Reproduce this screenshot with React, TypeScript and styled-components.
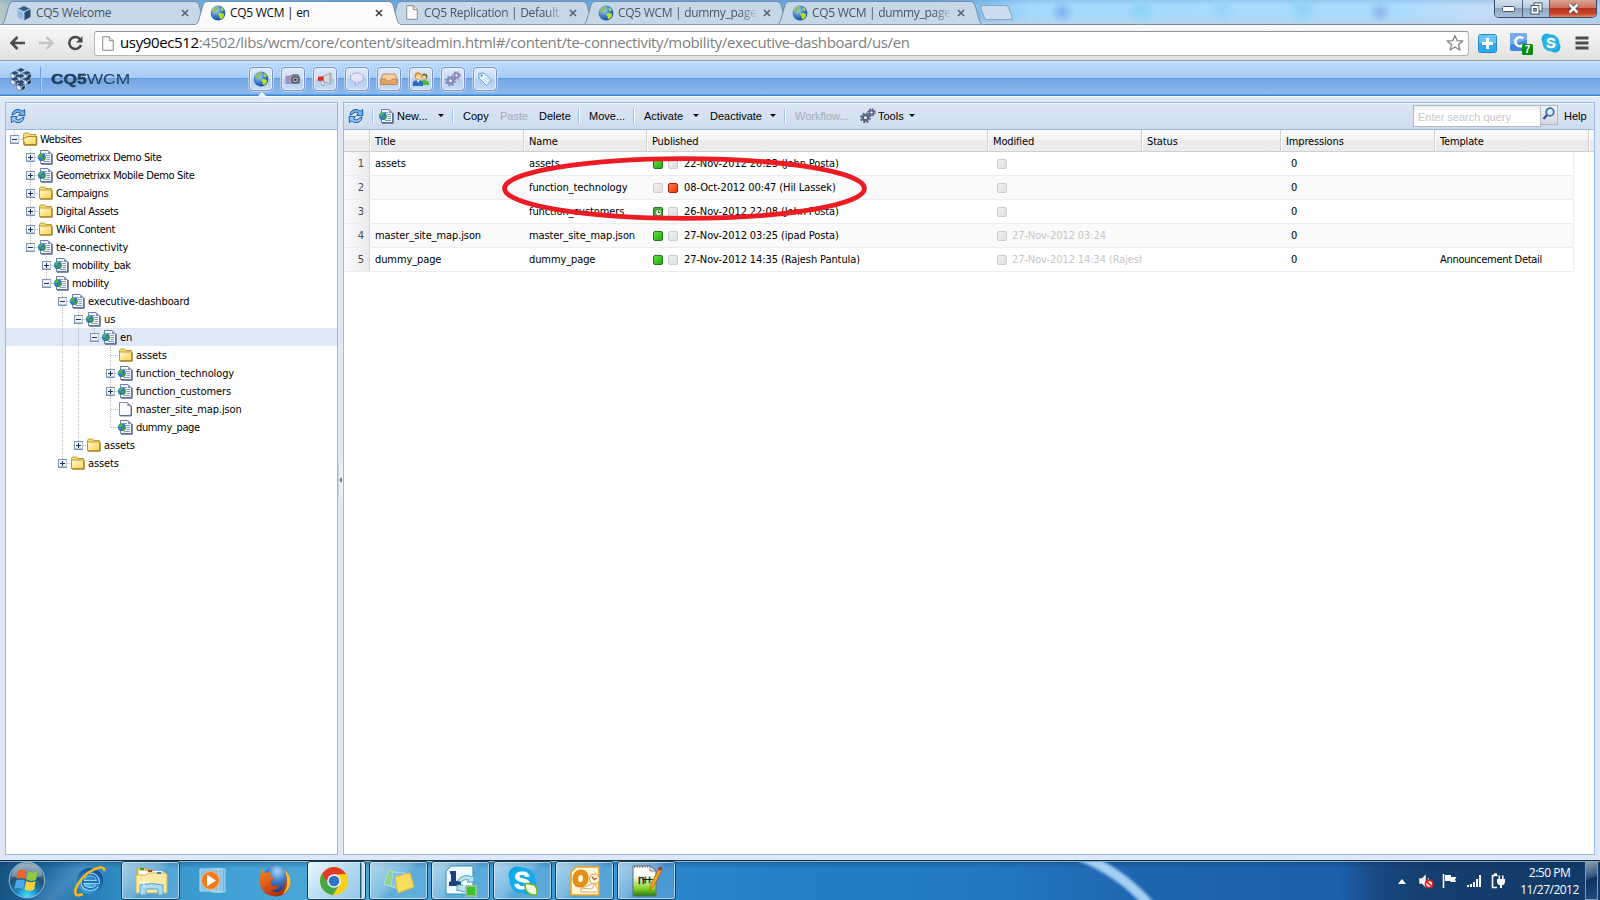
import React from 'react';
import styled, { createGlobalStyle, css } from 'styled-components';

const tahoma = `"DejaVu Sans Condensed", "DejaVu Sans", sans-serif`;
const segoe = `"Open Sans", "Noto Sans", sans-serif`;
const arial = `"Liberation Sans", Arial, sans-serif`;

const GlobalStyle = createGlobalStyle`
  * { box-sizing: border-box; }
  html, body { margin: 0; padding: 0; overflow: hidden; }
  svg { display: block; flex: none; }
`;

const Desktop = styled.div`
  width: 1600px;
  height: 900px;
  display: flex;
  flex-direction: column;
  background: #dfe8f6;
  color: #000;
  font: 11px/14px ${tahoma};
  overflow: hidden;
`;

/* ---------- Browser frame ---------- */

const TitleBar = styled.header`
  flex: none;
  height: 25px;
  display: flex;
  align-items: flex-start;
  background:
    radial-gradient(circle at 1062px 12px, #83b2ee 0, rgba(131, 178, 238, 0) 12px),
    radial-gradient(circle at 1141px 10px, #8bd2f6 0, rgba(139, 210, 246, 0) 16px),
    radial-gradient(circle at 1222px 10px, #93d4f8 0, rgba(147, 212, 248, 0) 14px),
    radial-gradient(circle at 1302px 9px, #8bd2f6 0, rgba(139, 210, 246, 0) 16px),
    radial-gradient(circle at 1380px 12px, #8ab6ec 0, rgba(138, 182, 236, 0) 12px),
    linear-gradient(180deg, rgba(80, 140, 200, 0.25) 0, rgba(255, 255, 255, 0) 5px, rgba(255, 255, 255, 0) 17px, rgba(190, 208, 228, 0.8) 24px, #75889c 24px),
    linear-gradient(90deg, #b5c8c0 0, #76aee2 30px, #6ca9e2 400px, #6cabe6 940px, #a3d9fb 1030px, #acdcfd 1400px, #c4dcf8 1480px, #a8cdf0 1600px);
`;

const TabStrip = styled.nav`
  display: flex;
  padding: 1px 0 0 1px;
`;

const TabBox = styled.div<{ $active?: boolean }>`
  position: relative;
  z-index: ${p => (p.$active ? 2 : 1)};
  width: 206px;
  height: 24px;
  margin-right: -12px;
  padding: 4px 0 0 15px;
  display: flex;
  color: ${p => (p.$active ? '#111' : '#4d5560')};
  font: 12px/16px ${segoe};
  letter-spacing: -0.3px;
`;

const TabShape = styled.svg`
  position: absolute;
  inset: 0;
  z-index: -1;
`;

const TabTitle = styled.span<{ $fade?: boolean }>`
  width: 138px;
  margin-left: 4px;
  overflow: hidden;
  white-space: nowrap;
  ${p => p.$fade && css`mask-image: linear-gradient(90deg, #000 122px, transparent 140px);`}
`;

const CloseGlyph = styled.svg`
  margin: 4px 0 0 7px;
`;

const NewTab = styled.div`
  width: 29px;
  height: 15px;
  margin: 5px 0 0 11px;
  border: 1px solid #8da3ba;
  border-radius: 3px;
  background: #cbdeef;
  transform: skewX(20deg);
`;

const WindowControls = styled.div`
  display: flex;
  height: 18px;
  margin: 0 3px 0 auto;
  border: 1px solid #3b4a5c;
  border-top: 0;
  border-radius: 0 0 5px 5px;
  overflow: hidden;
`;

const WindowButton = styled.div<{ $w: number; $close?: boolean }>`
  width: ${p => p.$w}px;
  display: flex;
  align-items: center;
  justify-content: center;
  border-right: ${p => (p.$close ? 0 : '1px solid #4f6073')};
  background: ${p => p.$close
    ? 'linear-gradient(180deg, #dba495 0, #cd7460 45%, #b8311a 50%, #c6452c 80%, #e08b6c 100%)'
    : 'linear-gradient(180deg, #d3e1ef 0, #b8cbde 45%, #8ba6c2 50%, #a6c2dc 100%)'};
`;

const BrowserBar = styled.div`
  flex: none;
  height: 36px;
  display: flex;
  align-items: center;
  background: linear-gradient(180deg, #f8f8f8 0, #e1e1e1 100%);
  border-top: 1px solid #fdfdfd;
  border-bottom: 1px solid #9c9c9c;
  padding: 0 0 0 9px;
`;

const NavIcons = styled.div`
  display: flex;
  flex: none;
  width: 85px;
  gap: 12px;
`;

const Omnibox = styled.div`
  display: flex;
  flex: none;
  align-items: center;
  width: 1375px;
  height: 25px;
  padding: 0 4px 0 7px;
  background: #fff;
  border: 1px solid #b5b5b5;
  border-top-color: #939393;
  border-radius: 3px;
`;

const Url = styled.span`
  flex: 1;
  margin: -2px 0 0 6px;
  color: #808080;
  font: 15px/22px ${segoe};
  letter-spacing: -0.36px;
  white-space: nowrap;
  b { font-weight: 400; color: #000; }
`;

const Extensions = styled.div`
  display: flex;
  align-items: center;
  margin-left: 9px;
  gap: 13px;
  svg { overflow: visible; }
`;

/* ---------- CQ header ---------- */

const AppHeader = styled.div`
  flex: none;
  height: 36px;
  display: flex;
  align-items: flex-start;
  padding: 6px 0 0 10px;
  border-bottom: 1px solid #fff;
  background: linear-gradient(180deg, #dcecfd 0, #bbdafd 2px, #a6cbf2 17px, #5c9be8 17px, #5c9be8 18px, #74a7e5 18px, #8cb8ea 33px, #3d83d6 34px, #3d83d6 35px);
`;

const Divider = styled.i`
  width: 2px;
  height: 24px;
  margin: 0 9px 0 8px;
  border-left: 1px solid #6c9edc;
  border-right: 1px solid #b4d4f7;
`;

const Brand = styled.div`
  width: 198px;
  margin-top: 4px;
  color: #23415f;
  font: 14px/16px ${arial};
  white-space: nowrap;
  span { display: inline-block; transform: scaleX(1.24); transform-origin: 0 0; }
  b { -webkit-text-stroke: 0.5px #23415f; }
`;

const Consoles = styled.div`
  display: flex;
  gap: 8px;
`;

const ConsoleButton = styled.div<{ $selected?: boolean }>`
  position: relative;
  width: 24px;
  height: 24px;
  display: flex;
  align-items: center;
  justify-content: center;
  border: 1px solid #7c93c4;
  border-radius: 4px;
  background: linear-gradient(180deg, #dfebfb 0, #c9dcf6 50%, #b3cdf2 50%, #c5dbf7 100%);
  box-shadow: inset 0 0 0 1px #e8f2fd, 0 0 0 1px rgba(220, 235, 252, 0.6);
  ${p => p.$selected && css`
    &::after {
      content: '';
      position: absolute;
      top: 24px;
      left: 7px;
      border: 5px solid transparent;
      border-top: 0;
      border-bottom: 5px solid #f0f6fe;
    }
  `}
`;

/* ---------- Panels ---------- */

const Workspace = styled.main`
  flex: none;
  height: 763px;
  display: flex;
  padding: 5px 5px 8px;
`;

const Panel = styled.section<{ $w: number }>`
  width: ${p => p.$w}px;
  height: 753px;
  display: flex;
  flex-direction: column;
  background: #fff;
  border: 1px solid #99bbe8;
`;

const PanelBar = styled.div`
  flex: none;
  height: 27px;
  display: flex;
  align-items: center;
  padding: 0 0 2px 4px;
  border-top: 1px solid #f2f6fc;
  border-bottom: 1px solid #99bbe8;
  background: linear-gradient(180deg, #dbe7f5 0, #cddbee 100%);
  font: 11px/16px ${arial};
  white-space: nowrap;
`;

const Splitter = styled.div`
  width: 5px;
  display: flex;
  flex-direction: column;
  justify-content: center;
  padding-top: 6px;
`;

const SplitHandle = styled.div`
  height: 34px;
  display: flex;
  align-items: center;
  background: #e9eff8;
  border-left: 1px solid #c6d3e6;
  &::before {
    content: '';
    border: 3px solid transparent;
    border-left: 0;
    border-right: 3px solid #7d7d7d;
  }
`;

const BarButton = styled.span<{ $w: number; $off?: boolean }>`
  width: ${p => p.$w}px;
  color: ${p => (p.$off ? '#a5adb8' : '#000')};
`;

const BarSeparator = styled.i<{ $gap?: number }>`
  width: 2px;
  height: 14px;
  margin: 0 ${p => p.$gap ?? 9}px 0 0;
  border-left: 1px solid #98c0ee;
  border-right: 1px solid #fff;
`;

const Caret = styled.i<{ $gap: number }>`
  margin-right: ${p => p.$gap}px;
  border: 3px solid transparent;
  border-top: 3px solid #000;
  border-bottom: 0;
`;

const BarIcon = styled.span<{ $gap: number }>`
  margin-right: ${p => p.$gap}px;
`;

const Search = styled.div`
  display: flex;
  align-items: flex-start;
  margin-left: auto;
  height: 22px;
`;

const SearchField = styled.div`
  width: 128px;
  height: 22px;
  padding: 3px 0 0 4px;
  border: 1px solid #b5b8c8;
  background: linear-gradient(180deg, #ececec 0, #fff 6px);
  color: #c8c8c8;
`;

const SearchButton = styled.div`
  width: 17px;
  height: 20px;
  border: 1px solid #b5b8c8;
  border-left: 0;
  background: linear-gradient(180deg, #f4f4f6 0, #d3d8e2 100%);
`;

const HelpLink = styled.span`
  width: 30px;
  margin-left: 6px;
`;

/* ---------- Tree ---------- */

const TreeRow = styled.div<{ $selected?: boolean }>`
  height: 18px;
  display: flex;
  align-items: center;
  background: ${p => (p.$selected ? '#dfe8f6' : 'transparent')};
`;

const TreeLabel = styled.span<{ $tight?: boolean }>`
  margin-left: 2px;
  padding-top: 1px;
  letter-spacing: ${p => (p.$tight ? '-0.36px' : '-0.12px')};
  white-space: nowrap;
`;

/* ---------- Grid ---------- */

const columns = '26px 154px 123px 341px 154px 139px 154px 154px';

const GridHead = styled.div`
  display: grid;
  grid-template-columns: ${columns} 1fr;
  height: 22px;
  border-bottom: 1px solid #d0d0d0;
  background: linear-gradient(180deg, #fafafa 0, #f5f5f6 45%, #ececee 50%, #eaebed 100%);
`;

const HeadCell = styled.div`
  padding: 5px 0 0 5px;
  border-right: 1px solid #cfcfcf;
  box-shadow: 1px 0 #fff;
  letter-spacing: -0.15px;
  &:last-child { border: 0; box-shadow: none; }
`;

const GridRow = styled.div<{ $alt?: boolean }>`
  display: grid;
  grid-template-columns: ${columns};
  width: 1230px;
  height: 24px;
  overflow: hidden;
  border-bottom: 1px solid #ededed;
  border-right: 1px solid #ededed;
  background: ${p => (p.$alt ? '#fafafa' : '#fff')};
`;

const Cell = styled.div<{ $inset?: number; $muted?: boolean; $tight?: boolean }>`
  display: flex;
  align-items: center;
  height: 23px;
  min-width: 0;
  overflow: hidden;
  padding-left: ${p => p.$inset ?? 5}px;
  color: ${p => (p.$muted ? '#c6c6c6' : '#000')};
  letter-spacing: ${p => (p.$tight ? '-0.3px' : '-0.1px')};
  white-space: nowrap;
`;

const NumberCell = styled.div`
  height: 24px;
  padding: 5px 5px 0 0;
  text-align: right;
  color: #4a4a4a;
  border-right: 1px solid #d8d8dc;
  background: linear-gradient(90deg, #f9f9fa 0, #f5f5f7 40%, #e9eaed 100%);
`;

const lampColors = {
  green: ['#1c7d12', '#63e04b', '#21a80f'],
  red: ['#a62500', '#ff7a4d', '#ef3300'],
  grey: ['#cccccc', '#f0f0f0', '#dedede'],
};

const Lamp = styled.i<{ $tone: keyof typeof lampColors; $gap?: number }>`
  flex: none;
  width: 10px;
  height: 10px;
  margin-right: ${p => p.$gap ?? 5}px;
  border: 1px solid ${p => lampColors[p.$tone][0]};
  border-radius: 2px;
  background: linear-gradient(135deg, ${p => lampColors[p.$tone][1]}, ${p => lampColors[p.$tone][2]});
`;

const Highlight = styled.svg`
  position: absolute;
  left: 500px;
  top: 154px;
`;

/* ---------- Taskbar ---------- */

const Taskbar = styled.footer`
  flex: none;
  position: relative;
  height: 40px;
  display: flex;
  align-items: flex-start;
  border-top: 1px solid #14303f;
  background:
    linear-gradient(180deg, rgba(170, 205, 230, 0.75) 0, rgba(170, 205, 230, 0.75) 1px, transparent 1px),
    linear-gradient(180deg, rgba(10, 40, 70, 0.35) 0, transparent 7px),
    linear-gradient(135deg, transparent 40px, rgba(160, 200, 230, 0.25) 62px, transparent 85px),
    linear-gradient(90deg, #175484 0, #2271aa 60px, #3390c8 130px, #3fa0d4 220px, #4ba6d8 300px, #3c98d2 600px, #2a86cb 680px, #2480c8 760px, #2278c0 1000px, #1e66b0 1130px, #1c5fac 1340px, #194a84 1375px, #153f70 1420px, #123a68 1600px);
`;

const Streak = styled.svg`
  position: absolute;
  left: 1060px;
  top: 1px;
`;

const StartOrb = styled.div`
  width: 59px;
  padding: 0 0 0 8px;
`;

const TaskItems = styled.div`
  display: flex;
  gap: 3px;
`;

const TaskItem = styled.div<{ $state?: 'open' | 'active' }>`
  width: 59px;
  height: 39px;
  display: flex;
  align-items: center;
  justify-content: center;
  ${p => p.$state && css`
    border: 1px solid #173f5c;
    border-radius: 3px;
    box-shadow: inset 0 0 0 1px rgba(220, 240, 252, 0.65);
    background: linear-gradient(135deg, rgba(255, 255, 255, 0.6) 0, rgba(255, 255, 255, 0.3) 45%, rgba(255, 255, 255, 0.12) 55%, rgba(255, 255, 255, 0.16) 100%);
  `}
  ${p => p.$state === 'active' && css`
    padding-right: 6px;
    background: linear-gradient(90deg, transparent 52px, #23597c 52px, #23597c 53px, rgba(255, 255, 255, 0.5) 54px, rgba(255, 255, 255, 0.2) 58px),
      linear-gradient(135deg, #eef8fd 0, #b4daef 50%, #8fc6e6 100%);
  `}
`;

const Tray = styled.div`
  display: flex;
  align-items: center;
  height: 38px;
  margin-left: auto;
  padding-top: 2px;
`;

const TrayIcon = styled.span<{ $gap: number }>`
  margin-right: ${p => p.$gap}px;
`;

const Clock = styled.div`
  width: 71px;
  color: #fff;
  font: 12px/17px ${segoe};
  letter-spacing: -0.5px;
  text-align: center;
`;

const ShowDesktop = styled.div`
  width: 13px;
  height: 38px;
  margin: 1px 2px 0 0;
  border: 1px solid #7f9dbb;
  background: linear-gradient(160deg, rgba(255, 255, 255, 0.5) 0, rgba(255, 255, 255, 0.12) 40%, rgba(10, 40, 80, 0.5) 45%, rgba(60, 120, 190, 0.3) 100%);
`;

/* ---------- Icons ---------- */

const Globe = ({ size = 16 }: { size?: number }) => (
  <svg width={size} height={size} viewBox="0 0 16 16">
    <defs>
      <radialGradient id="sea" cx="0.35" cy="0.3" r="0.8">
        <stop offset="0" stopColor="#b9dcf7" />
        <stop offset="0.5" stopColor="#3f83cf" />
        <stop offset="1" stopColor="#123f8f" />
      </radialGradient>
    </defs>
    <circle cx="8" cy="8" r="7.4" fill="url(#sea)" />
    <path d="M2 5 4.500 2.200 7.500 1l1.500 1-2 1.300.4 1.600L6 6.400 4.600 8.600 2.500 7z" fill="#8cbf6a" />
    <path d="M8.500 8.500 11 8l3 1-.4 2.800-2.400 2.400-1.400-.6-.2-2.300-1.400-1.200z" fill="#b5e61d" />
    <path d="M11.5 2.200 13.800 4.800l-1 1.4-1.6-.8-.6-1.600z" fill="#a9d838" />
  </svg>
);

const Cube = () => (
  <svg width="16" height="16" viewBox="0 0 16 16">
    <path d="M8 1 14.500 4 8 7 1.500 4z" fill="#35608c" />
    <path d="M1.500 4 8 7v8.500L1.500 12z" fill="#8fbbe2" />
    <path d="M14.500 4 8 7v8.500l6.500-3.500z" fill="#28486c" />
    <path d="M8 7v8M2 4l6 3 6-3" stroke="#e2eef8" strokeWidth="0.8" fill="none" />
  </svg>
);

const CqLogo = () => (
  <svg width="22" height="24" viewBox="0 0 22 24">
    {[[11, 4.5], [5, 7.5], [17, 7.5], [11, 10.5], [5, 13.5], [17, 13.5], [11, 16.5], [11, 19]].map(([x, y], i) => (
      <g key={i} transform={`translate(${x} ${y})`}>
        <path d="M0-3.4 4-1.5 0 .5-4-1.5z" fill="#2c4a78" />
        <path d="M-4.2-1.2-.2.9v4l-4-2.1z" fill="#e9f3fc" stroke="#335375" strokeWidth="0.5" />
        <path d="M4.2-1.2.2.9v4l4-2.1z" fill={i % 3 ? '#1d3655' : '#7ea6cc'} stroke="#e3eef9" strokeWidth="0.5" />
      </g>
    ))}
  </svg>
);

const BlankPage = ({ w = 12, h = 15, stroke = '#8a8a8a' }: { w?: number; h?: number; stroke?: string }) => (
  <svg width={w} height={h} viewBox="0 0 12 15">
    <path d="M.7.7h6.6l4 4v9.6H.7z" fill="#fcfcfc" stroke={stroke} />
    <path d="M7.3.7v4h4" fill="#e6ecef" stroke={stroke} />
  </svg>
);

const FolderIcon = ({ open }: { open?: boolean }) => (
  <svg width="16" height="16" viewBox="0 0 16 16">
    <defs>
      <linearGradient id="manila" x1="0" y1="0" x2="1" y2="1">
        <stop offset="0" stopColor="#fffbd0" />
        <stop offset="1" stopColor="#fbd050" />
      </linearGradient>
    </defs>
    <path d="M1.5 13.5v-10l1-1.5h4l1 1.5h6v10z" fill="#f6df7c" stroke="#c39a2c" />
    {open
      ? <path d="M.8 7h3l1-1.5h10v8H3z" fill="url(#manila)" stroke="#b58a1c" />
      : <path d="M1.500 5h12v8.500h-12z" fill="url(#manila)" stroke="#c39a2c" />}
    <path d="M2 14.300h12.300V5.500" stroke="#8a6412" fill="none" strokeWidth="0.8" />
  </svg>
);

const WebPageIcon = () => (
  <svg width="16" height="16" viewBox="0 0 16 16">
    <path d="M2.500 1.500h7.500l3.500 3.500v9.500h-11z" fill="#f4f7fc" stroke="#6b7da3" />
    <path d="M14.200 5v10.200H3" stroke="#4a5a80" fill="none" />
    <path d="M10 1.500v3.400h3.500z" fill="#8593b5" />
    <path d="M5 4.500h4M8 6.500h4M8.500 8.500H12M8.500 10.500H12M6 12.500h6" stroke="#8c99b4" />
    <circle cx="3.900" cy="8.200" r="3.900" fill="#3079c4" />
    <path d="M.700 6 2.900 4.400 4.900 4.900 3.700 6.600 3.100 8.400.8 8z" fill="#55b948" />
    <path d="M3.900 8.600 6.700 7.200l1 1.600-1.500 2.800-1.800.1z" fill="#3d9e3c" />
  </svg>
);

const FilePageIcon = () => (
  <svg width="16" height="16" viewBox="0 0 16 16">
    <path d="M1.500 1.500h7.800l3.700 3.500v9.500H1.500z" fill="#f9fbfe" stroke="#7f8fb3" />
    <path d="M13.400 5v9.900H2" stroke="#4f608a" fill="none" />
    <path d="M9.300 1.500V5H13z" fill="#7f8fb3" />
  </svg>
);

const RefreshIcon = () => (
  <svg width="16" height="16" viewBox="0 0 16 16">
    <path d="M2 6.800C2.300 3.500 5 1.400 8 1.500c1.700 0 3 .7 4 1.800L14.600 1.500 14.900 7.800 8.600 7.300 10.300 5.200C8.500 3.600 5.500 4 4.300 6.300z" fill="#6fb5f0" stroke="#174f94" strokeWidth="0.900" strokeLinejoin="round" />
    <path d="M14 9.400c-.3 3.300-3 5.300-6 5.200-1.700 0-3-.7-4-1.800L1.400 14.600 1.100 8.300l6.300.5-1.700 2.100c1.800 1.600 4.800 1.200 6-1.100z" fill="#8cc8f8" stroke="#174f94" strokeWidth="0.900" strokeLinejoin="round" />
  </svg>
);

const Gear = ({ x, y, s, fill }: { x: number; y: number; s: number; fill: string }) => (
  <g transform={`translate(${x} ${y}) scale(${s})`}>
    <circle r="3.6" fill="none" stroke={fill} strokeWidth="1.8" strokeDasharray="1.6 1.230" />
    <circle r="2.1" fill="none" stroke={fill} strokeWidth="2" />
    <circle r="1.100" fill="#eef0f8" />
  </g>
);

const GearsIcon = ({ fill = '#5d6087' }: { fill?: string }) => (
  <svg width="16" height="16" viewBox="0 0 16 16">
    <Gear x={5.4} y={9.800} s={1.200} fill={fill} />
    <Gear x={11.500} y={4.500} s={0.950} fill={fill} />
  </svg>
);

const CameraIcon = () => (
  <svg width="16" height="16" viewBox="0 0 16 16">
    <path d="M.5 5h5v8h-5z" fill="#9a92bd" />
    <path d="M.5 5l1-1.200h4L5.500 5z" fill="#c9c5de" />
    <path d="M5.500 4.500 8 3h5l2 2.500v7l-9 .5z" fill="#84868f" />
    <circle cx="10.500" cy="8.800" r="3.900" fill="#55575f" />
    <circle cx="10.500" cy="8.800" r="2.500" fill="#b9bbc8" />
    <circle cx="10.500" cy="8.800" r="1.300" fill="#2e3240" />
  </svg>
);

const MegaphoneIcon = () => (
  <svg width="16" height="16" viewBox="0 0 16 16">
    <path d="M6 5.500 13 2v11L6 9.800z" fill="#d8dadf" stroke="#898c96" strokeWidth="0.700" />
    <path d="M1 5.500h5.500v4.300H1z" fill="#da2c22" />
    <path d="M13 1.500h1.600v12H13z" fill="#b3b6bf" />
    <path d="M3.500 10h3l.8 4.500H5z" fill="#eceef2" stroke="#8c8f98" strokeWidth="0.700" />
  </svg>
);

const BubbleIcon = () => (
  <svg width="16" height="16" viewBox="0 0 16 16">
    <path d="M8 2c4 0 6.500 2 6.500 4.700S12 11.500 9 11.500c-.3 1.500-1.500 2.700-3 3 .6-1 .8-2 .5-3.200C3.500 11 1.500 9 1.500 6.700 1.500 4 4 2 8 2z" fill="#e6e2f8" stroke="#a79fd2" strokeWidth="0.900" />
  </svg>
);

const InboxIcon = () => (
  <svg width="18" height="16" viewBox="0 0 18 16">
    <path d="M3 3h12l2 5v5.500H1V8z" fill="#f3cfa0" stroke="#c28a55" strokeWidth="0.900" />
    <path d="M1 8h5l1 2h4l1-2h5v5.500H1z" fill="#e2a468" stroke="#b87c48" strokeWidth="0.700" />
  </svg>
);

const UsersIcon = () => (
  <svg width="18" height="16" viewBox="0 0 18 16">
    <circle cx="12.500" cy="5.500" r="3" fill="#6b6b3c" />
    <circle cx="12" cy="6.400" r="2.200" fill="#f4c48c" />
    <path d="M8.500 14V11q1-2 4-2t4.500 2.500V14z" fill="#4eb83a" />
    <circle cx="6" cy="4.800" r="3.600" fill="#d99828" />
    <circle cx="6.500" cy="5.800" r="2.500" fill="#fbd7a4" />
    <path d="M.8 15v-3.500Q2 9 6 9t5 2.500V15z" fill="#2d6cc2" />
    <path d="m5 9 1.200 3L7.500 9z" fill="#fff" />
  </svg>
);

const TagIcon = () => (
  <svg width="16" height="16" viewBox="0 0 16 16">
    <path d="M2 2.500 7 2l7.500 7-5 5.500L2 7z" fill="#e9f6fe" stroke="#58a6d8" />
    <circle cx="4.600" cy="4.600" r="1.100" fill="#3f83c4" />
    <path d="m6.500 8 3.500 3.500M8.500 6l3.500 3.500" stroke="#9fcbe8" />
  </svg>
);

const Expander = ({ open, leaf, up, down }: { open?: boolean; leaf?: boolean; up?: boolean; down?: boolean }) => (
  <svg width="16" height="18" viewBox="0 0 16 18" shapeRendering="crispEdges">
    {up && <path d="M8.500 0V9" stroke="#b8b8b8" strokeDasharray="1 1" />}
    {down && <path d="M8.500 8V18" stroke="#b8b8b8" strokeDasharray="1 1" />}
    <path d="M8.500 9.500H16" stroke="#b8b8b8" strokeDasharray="1 1" />
    {!leaf && (
      <>
        <rect x="4.500" y="5.500" width="8" height="8" fill="#f0f3f8" stroke="#7e94b4" />
        <path d="M5 12.500h8M12.500 6v7" stroke="#b9c6d8" />
        <path d={open ? 'M6 9.500h5' : 'M6 9.500h5M8.500 7v5'} stroke="#1f2f55" />
      </>
    )}
  </svg>
);

const Guide = ({ line }: { line?: boolean }) => (
  <svg width="16" height="18" viewBox="0 0 16 18" shapeRendering="crispEdges">
    {line && <path d="M8.500 0V18" stroke="#b8b8b8" strokeDasharray="1 1" />}
  </svg>
);

/* ---------- Data ---------- */

type Kind = 'web' | 'folder' | 'openFolder' | 'file';
type Node = { label: string; level: number; kind: Kind; open?: boolean; leaf?: boolean; up?: boolean; down?: boolean; lines?: number[]; tight?: boolean; selected?: boolean };

const tree: Node[] = [
  { label: 'Websites', level: 0, kind: 'openFolder', open: true, up: true, tight: true },
  { label: 'Geometrixx Demo Site', level: 1, kind: 'web', up: true, down: true, tight: true },
  { label: 'Geometrixx Mobile Demo Site', level: 1, kind: 'web', up: true, down: true, tight: true },
  { label: 'Campaigns', level: 1, kind: 'folder', up: true, down: true, tight: true },
  { label: 'Digital Assets', level: 1, kind: 'folder', up: true, down: true, tight: true },
  { label: 'Wiki Content', level: 1, kind: 'folder', up: true, down: true, tight: true },
  { label: 'te-connectivity', level: 1, kind: 'web', open: true, up: true },
  { label: 'mobility_bak', level: 2, kind: 'web', up: true, down: true, tight: true },
  { label: 'mobility', level: 2, kind: 'web', open: true, up: true, tight: true },
  { label: 'executive-dashboard', level: 3, kind: 'web', open: true, up: true, down: true },
  { label: 'us', level: 4, kind: 'web', open: true, up: true, down: true, lines: [3] },
  { label: 'en', level: 5, kind: 'web', open: true, up: true, lines: [3, 4], selected: true },
  { label: 'assets', level: 6, kind: 'folder', leaf: true, up: true, down: true, lines: [3, 4] },
  { label: 'function_technology', level: 6, kind: 'web', up: true, down: true, lines: [3, 4] },
  { label: 'function_customers', level: 6, kind: 'web', up: true, down: true, lines: [3, 4] },
  { label: 'master_site_map.json', level: 6, kind: 'file', leaf: true, up: true, down: true, lines: [3, 4] },
  { label: 'dummy_page', level: 6, kind: 'web', leaf: true, up: true, lines: [3, 4], tight: true },
  { label: 'assets', level: 4, kind: 'folder', up: true, lines: [3] },
  { label: 'assets', level: 3, kind: 'folder', up: true },
];

type Row = { title: string; name: string; on: 'green' | 'grey' | 'clock'; off: 'grey' | 'red'; published: string; modified: string; template: string };

const rows: Row[] = [
  { title: 'assets', name: 'assets', on: 'green', off: 'grey', published: '22-Nov-2012 20:23 (John Posta)', modified: '', template: '' },
  { title: '', name: 'function_technology', on: 'grey', off: 'red', published: '08-Oct-2012 00:47 (Hil Lassek)', modified: '', template: '' },
  { title: '', name: 'function_customers', on: 'clock', off: 'grey', published: '26-Nov-2012 22:08 (John Posta)', modified: '', template: '' },
  { title: 'master_site_map.json', name: 'master_site_map.json', on: 'green', off: 'grey', published: '27-Nov-2012 03:25 (ipad Posta)', modified: '27-Nov-2012 03:24', template: '' },
  { title: 'dummy_page', name: 'dummy_page', on: 'green', off: 'grey', published: '27-Nov-2012 14:35 (Rajesh Pantula)', modified: '27-Nov-2012 14:34 (Rajesh Pantula)', template: 'Announcement Detail' },
];

const ClockLamp = styled.svg`
  margin-right: 5px;
`;

const nodeIcon: Record<Kind, React.ReactNode> = {
  web: <WebPageIcon />,
  folder: <FolderIcon />,
  openFolder: <FolderIcon open />,
  file: <FilePageIcon />,
};

/* ---------- Sections ---------- */

const Tab = ({ title, icon, active, fade }: { title: string; icon: React.ReactNode; active?: boolean; fade?: boolean }) => (
  <TabBox $active={active}>
    <TabShape width="206" height="24" viewBox="0 0 206 24">
      <path
        d="M0 24Q2.500 23 3.500 20L8 4Q9 .5 12 .5H194Q197 .5 198 4L202.500 20Q203.500 23 206 24z"
        fill={active ? '#fbfbfb' : '#c6d7e7'}
        stroke="#71879e"
        strokeWidth="0.900"
      />
      {!active && <path d="M0 23.600H206" stroke="#8496a8" />}
      {active && <path d="M1 23.600H205" stroke="#fafafa" strokeWidth="1.400" />}
    </TabShape>
    {icon}
    <TabTitle $fade={fade}>{title}</TabTitle>
    <CloseGlyph width="8" height="8" viewBox="0 0 8 8">
      <path d="m1 1 6 6M7 1 1 7" stroke={active ? '#444' : '#5b636c'} strokeWidth="1.700" />
    </CloseGlyph>
  </TabBox>
);

const BrowserFrame = () => (
  <>
    <TitleBar>
      <TabStrip>
        <Tab title="CQ5 Welcome" icon={<Cube />} />
        <Tab title="CQ5 WCM | en" icon={<Globe />} active />
        <Tab title="CQ5 Replication | Default A" icon={<BlankPage w={16} />} fade />
        <Tab title="CQ5 WCM | dummy_page" icon={<Globe />} fade />
        <Tab title="CQ5 WCM | dummy_page" icon={<Globe />} fade />
      </TabStrip>
      <NewTab />
      <WindowControls>
        <WindowButton $w={28}>
          <svg width="13" height="6" viewBox="0 0 13 6"><rect x=".5" y=".5" width="12" height="5" rx="1" fill="#fff" stroke="#4a5563" /></svg>
        </WindowButton>
        <WindowButton $w={27}>
          <svg width="13" height="13" viewBox="0 0 13 13">
            <rect x="4" y="1" width="8" height="8" fill="#fff" stroke="#4a5563" />
            <rect x="1" y="3.500" width="8" height="8.500" fill="#fff" stroke="#4a5563" />
            <rect x="3.700" y="6.500" width="2.600" height="2.600" fill="#8ba6c2" stroke="#4a5563" />
          </svg>
        </WindowButton>
        <WindowButton $w={46} $close>
          <svg width="13" height="11" viewBox="0 0 13 11">
            <path d="M2.500 1.500 10.500 9.500M10.500 1.500 2.500 9.500" stroke="#4b3b45" strokeWidth="4.400" />
            <path d="M2.500 1.500 10.500 9.500M10.500 1.500 2.500 9.500" stroke="#fff" strokeWidth="2.600" />
          </svg>
        </WindowButton>
      </WindowControls>
    </TitleBar>
    <BrowserBar>
      <NavIcons>
        <svg width="17" height="16" viewBox="0 0 17 16"><path d="M16 8H3M8.500 2 2.500 8l6 6" stroke="#4a4a4a" strokeWidth="2.600" fill="none" /></svg>
        <svg width="17" height="16" viewBox="0 0 17 16"><path d="M1 8h13M8.500 2l6 6-6 6" stroke="#c4c4c4" strokeWidth="2.400" fill="none" /></svg>
        <svg width="17" height="16" viewBox="0 0 17 16">
          <path d="M13.200 4.500A6 6 0 1 0 14 10" stroke="#4a4a4a" strokeWidth="2.500" fill="none" />
          <path d="M15.500 1v6.500H9z" fill="#4a4a4a" />
        </svg>
      </NavIcons>
      <Omnibox>
        <BlankPage />
        <Url><b>usy90ec512</b>:4502/libs/wcm/core/content/siteadmin.html#/content/te-connectivity/mobility/executive-dashboard/us/en</Url>
        <svg width="18" height="18" viewBox="0 0 18 18">
          <path d="m9 1.500 2.100 5.100 5.700.4-4.300 3.600 1.400 5.400L9 13l-4.900 3 1.400-5.400L1.200 7l5.700-.4z" fill="#fff" stroke="#858585" strokeWidth="1.300" strokeLinejoin="round" />
        </svg>
      </Omnibox>
      <Extensions>
        <svg width="19" height="19" viewBox="0 0 19 19">
          <rect x=".5" y=".5" width="18" height="18" rx="2" fill="#2cacf0" stroke="#2787c4" />
          <path d="M1 1h17v8H1z" fill="#6cc5f5" />
          <path d="M9.500 4v11M4 9.500h11" stroke="#fff" strokeWidth="3" />
        </svg>
        <svg width="18" height="24" viewBox="0 0 18 24">
          <rect x="0" y="2" width="17" height="18" rx="2" fill="#4285dd" />
          <path d="M0 4q0-2 2-2h13q2 0 2 2v5L0 14z" fill="#78abea" />
          <path d="M13 7.500a4.500 4.500 0 1 0 0 6.500" stroke="#fff" strokeWidth="2.600" fill="none" />
          <rect x="12" y="13" width="11" height="11" rx="1.500" fill="#0b8a0b" />
          <text x="17.500" y="22.100" fill="#fff" fontFamily="Liberation Sans" fontWeight="700" fontSize="10" textAnchor="middle">7</text>
        </svg>
        <svg width="20" height="20" viewBox="0 0 20 20">
          <circle cx="6" cy="6" r="5.500" fill="#1ea6de" />
          <circle cx="14" cy="14" r="5.500" fill="#1ea6de" />
          <circle cx="10" cy="10" r="8.500" fill="#29b1e8" />
          <text x="10" y="15" fill="#fff" stroke="#fff" strokeWidth="0.500" fontFamily="Liberation Sans" fontWeight="700" fontSize="14" textAnchor="middle">S</text>
        </svg>
        <svg width="16" height="14" viewBox="0 0 16 14"><path d="M1.500 2h13M1.500 7h13M1.500 12h13" stroke="#4c4c4c" strokeWidth="3" /></svg>
      </Extensions>
    </BrowserBar>
  </>
);

const consoles = [<Globe />, <CameraIcon />, <MegaphoneIcon />, <BubbleIcon />, <InboxIcon />, <UsersIcon />, <GearsIcon fill="#8888b4" />, <TagIcon />];

const SiteTree = () => (
  <Panel $w={333}>
    <PanelBar><RefreshIcon /></PanelBar>
    {tree.map((n, i) => (
      <TreeRow key={i} $selected={n.selected}>
        {Array.from({ length: n.level }, (_, l) => <Guide key={l} line={n.lines?.includes(l)} />)}
        <Expander open={n.open} leaf={n.leaf} up={n.up} down={n.down} />
        {nodeIcon[n.kind]}
        <TreeLabel $tight={n.tight}>{n.label}</TreeLabel>
      </TreeRow>
    ))}
  </Panel>
);

const PageGrid = () => (
  <Panel $w={1252}>
    <PanelBar>
      <BarIcon $gap={8}><RefreshIcon /></BarIcon>
      <BarSeparator $gap={5} />
      <BarIcon $gap={2}><WebPageIcon /></BarIcon>
      <BarButton $w={41}>New...</BarButton>
      <Caret $gap={8} />
      <BarSeparator />
      <BarButton $w={37}>Copy</BarButton>
      <BarButton $w={39} $off>Paste</BarButton>
      <BarButton $w={39}>Delete</BarButton>
      <BarSeparator />
      <BarButton $w={44}>Move...</BarButton>
      <BarSeparator />
      <BarButton $w={49}>Activate</BarButton>
      <Caret $gap={11} />
      <BarButton $w={60}>Deactivate</BarButton>
      <Caret $gap={8} />
      <BarSeparator />
      <BarButton $w={65} $off>Workflow...</BarButton>
      <BarIcon $gap={2}><GearsIcon /></BarIcon>
      <BarButton $w={31}>Tools</BarButton>
      <Caret $gap={0} />
      <Search>
        <SearchField>Enter search query</SearchField>
        <SearchButton>
          <svg width="16" height="17" viewBox="0 0 16 17">
            <circle cx="9" cy="6" r="3.800" fill="#e3effa" stroke="#3c6eb4" strokeWidth="1.800" />
            <path d="m6 9-3.500 4" stroke="#2a4d8c" strokeWidth="2.200" />
          </svg>
        </SearchButton>
      </Search>
      <HelpLink>Help</HelpLink>
    </PanelBar>
    <GridHead>
      {['', 'Title', 'Name', 'Published', 'Modified', 'Status', 'Impressions', 'Template', ''].map((h, i) => <HeadCell key={i}>{h}</HeadCell>)}
    </GridHead>
    {rows.map((r, i) => (
      <GridRow key={i} $alt={i % 2 === 1}>
        <NumberCell>{i + 1}</NumberCell>
        <Cell>{r.title}</Cell>
        <Cell>{r.name}</Cell>
        <Cell $inset={6}>
          {r.on === 'clock' ? (
            <ClockLamp width="10" height="10" viewBox="0 0 10 10">
              <rect x=".5" y=".5" width="9" height="9" rx="1" fill="#3fae33" stroke="#1c7d12" />
              <circle cx="5.500" cy="5.500" r="3.100" fill="#e8f6e6" stroke="#2c6e25" strokeWidth="0.700" />
              <path d="M5.500 3.500v2h1.800" stroke="#222" fill="none" strokeWidth="0.900" />
            </ClockLamp>
          ) : <Lamp $tone={r.on} />}
          <Lamp $tone={r.off} $gap={6} />
          {r.published}
        </Cell>
        <Cell $inset={9} $muted><Lamp $tone="grey" />{r.modified}</Cell>
        <Cell />
        <Cell $inset={10}>0</Cell>
        <Cell $tight>{r.template}</Cell>
      </GridRow>
    ))}
  </Panel>
);

const Orb = () => (
  <svg width="38" height="38" viewBox="0 0 38 38">
    <defs>
      <radialGradient id="orb" cx="0.5" cy="0.95" r="0.9">
        <stop offset="0" stopColor="#41e0ff" />
        <stop offset="0.35" stopColor="#1a83b8" />
        <stop offset="0.65" stopColor="#24506f" />
        <stop offset="1" stopColor="#7d97a8" />
      </radialGradient>
    </defs>
    <circle cx="19" cy="19" r="17.800" fill="url(#orb)" stroke="#8fc0d8" strokeWidth="1" />
    <path d="M3.500 15Q6 3 19 3t15.500 12Q19 20 3.500 15z" fill="#dcebf2" opacity="0.350" />
    <path d="M10 10q4-2.500 8.500-.2L17 18q-4-2-8.500 0z" fill="#f0622a" />
    <path d="M19.800 10.300q4.500 2.200 9.700.2L27.800 19q-5 2-9.500-.5z" fill="#8ecb3c" />
    <path d="M8.200 19.500q4.500-2 8.600 0L15.300 28q-4-2.200-9 .2z" fill="#4da9ec" />
    <path d="M18.100 20q4.500 2.200 9.500.3L26 28.800q-5 2-9.500-.4z" fill="#fdd034" />
  </svg>
);

const IeIcon = () => (
  <svg width="34" height="34" viewBox="0 0 34 34">
    <defs><radialGradient id="ie" cx="0.4" cy="0.7" r="0.7"><stop offset="0" stopColor="#4fc0f2" /><stop offset="1" stopColor="#0d4d94" /></radialGradient></defs>
    <circle cx="18" cy="17" r="13" fill="url(#ie)" />
    <path d="M10.500 18h15.500c0-10-15.500-10-15.500 0 0 8 11 9 14.500 3.500" stroke="#bfe6fa" strokeWidth="3.600" fill="none" />
    <path d="M10.500 18h15.500c0-10-15.500-10-15.500 0 0 8 11 9 14.500 3.500" stroke="#1f74c0" strokeWidth="2" fill="none" />
    <path d="M32 7q1-4-4-3.500Q15 6 6 20q-5 9-1 11 2 .8 6-1" stroke="#f3b71e" strokeWidth="2.600" fill="none" />
  </svg>
);

const ExplorerIcon = () => (
  <svg width="34" height="32" viewBox="0 0 34 32">
    <path d="M3 3h8l2 2h7l1 2h10l1 4v15H3z" fill="#e8cf78" stroke="#c3a345" />
    <path d="M5 6h23l3 3v6H5z" fill="#fff" />
    <path d="M2 10h10l2-2h18l1 2v18H2z" fill="#f8e9a4" stroke="#cfb155" />
    <path d="M6 3h4v2H6z" fill="#2da52d" /><path d="M14 5h4v2h-4z" fill="#c23f2c" /><path d="M23 7h4v2h-4z" fill="#3485d6" />
    <path d="M6 20q12-3 23 0v10h-5v-6H12v6H6z" fill="#a9dbf3" stroke="#5aa8d2" />
    <path d="M10 12v10M5 17h10" stroke="#fff" strokeWidth="0.900" />
  </svg>
);

const MediaIcon = () => (
  <svg width="30" height="28" viewBox="0 0 30 28">
    <path d="M16 2h11v23H16z" fill="#6db3da" stroke="#a9d4ec" /><path d="M13 2h11v23H13z" fill="#7abde0" stroke="#b9dcf0" />
    <path d="M2 2h19v22H2z" fill="#86c4e4" stroke="#b9dcf0" />
    <circle cx="12.500" cy="13.500" r="9" fill="#f47a1b" stroke="#fbb679" />
    <path d="M9 7.500v12l9-6z" fill="#fff" />
  </svg>
);

const FirefoxIcon = () => (
  <svg width="34" height="34" viewBox="0 0 34 34">
    <defs>
      <linearGradient id="fox" x1="0" y1="0" x2="0.6" y2="1"><stop offset="0" stopColor="#f08a24" /><stop offset="0.5" stopColor="#dd5a1a" /><stop offset="1" stopColor="#a82c10" /></linearGradient>
      <radialGradient id="sky" cx="0.55" cy="0.2" r="0.8"><stop offset="0" stopColor="#a9d8f5" /><stop offset="0.45" stopColor="#3f7fcc" /><stop offset="1" stopColor="#152f7c" /></radialGradient>
    </defs>
    <circle cx="18" cy="15.500" r="13.500" fill="url(#sky)" />
    <path d="M4.500 5Q5.500 8 8 9q3-1.500 5.500 0l-1.500 3.500 4.500 1.500-3.500 3q-1 4 2.500 5 4 .5 6-2-2 7-8 6 4 3.500 9 1 5.500-4 4-12 1.800 1 2 3.500Q29 10 26 5.500q7 5 6.500 14Q30 32 17.500 32.500 3.500 31.500 1.800 19 1.300 10 4.500 5z" fill="url(#fox)" />
    <path d="M26 5.500q7 5 6.500 14-1.800 8-8 11 5-6 4.500-13.500Q29 10 26 5.500z" fill="#fbbf2d" />
  </svg>
);

const ChromeIcon = () => (
  <svg width="30" height="30" viewBox="0 0 30 30">
    <circle cx="15" cy="15" r="14" fill="#fbd018" />
    <path d="M2.900 8A14 14 0 0 1 27.100 8L15 8.500 9 18z" fill="#e03b2c" />
    <path d="M2.900 8A14 14 0 0 0 14 29L20.500 18.500 15 21 9.500 18z" fill="#44a847" />
    <circle cx="15" cy="15" r="6.800" fill="#f4f4f4" /><circle cx="15" cy="15" r="5.300" fill="#2f72c9" />
  </svg>
);

const NotesIcon = () => (
  <svg width="34" height="30" viewBox="0 0 34 30">
    <path d="m7 4 14 5-5 14-14-5z" fill="#8fd28a" stroke="#b7e6b4" />
    <path d="m11 6 13 1-1 14-14-1z" fill="#7fc0e4" stroke="#a9daf0" />
    <path d="m13 11 15-4 4 14-16 6z" fill="#fbdc5e" stroke="#e6bd3a" />
  </svg>
);

const LyncIcon = () => (
  <svg width="34" height="34" viewBox="0 0 34 34">
    <path d="M2 7 7 2h22v28H2z" fill="#eef9fd" stroke="#2f90ac" />
    <path d="M6 7h6v10h5v5H5v-4l2-1v-7H6z" fill="#1e4080" />
    <path d="M14 17a9 7 0 0 1 14-4l2-2v7h-7l2-2a6 4 0 0 0-8 2zM28 22a8 7 0 0 1-13 4l-2 1v-6h6" fill="#bde2ef" stroke="#4aa3bd" />
    <rect x="22" y="22" width="10" height="10" fill="#3cc22b" stroke="#eaffea" strokeWidth="1.600" /><rect x="22" y="22" width="10" height="10" fill="none" stroke="#1f7a17" strokeWidth="0.700" />
  </svg>
);

const SkypeIcon = () => (
  <svg width="34" height="34" viewBox="0 0 34 34">
    <circle cx="11" cy="11" r="8.500" fill="#11a7e6" /><circle cx="22" cy="22" r="8.500" fill="#11a7e6" /><circle cx="16.500" cy="16.500" r="13" fill="#15abea" />
    <text x="16" y="25" fill="#fff" stroke="#fff" strokeWidth="0.800" fontFamily="Liberation Sans" fontWeight="700" fontSize="24" textAnchor="middle">S</text>
    <path d="M19 22q0-4 5-2 7 0 7 7 1 4-2 4-9 0-10-9z" fill="#eef9dc" stroke="#6fb41b" strokeWidth="1.600" />
  </svg>
);

const OutlookIcon = () => (
  <svg width="32" height="32" viewBox="0 0 32 32">
    <path d="M2 7 7 2h23v28H2z" fill="#fff4d6" stroke="#e9a31c" strokeWidth="1.600" />
    <path d="M12 5c5 0 7 3 7 8s-3 9-8 9-7-3-7-8 3-9 8-9zm-.3 4.500c-2.200 0-3 2-3 4.500s.6 3.700 2.600 3.700 3.200-1.800 3.200-4.400-.8-3.800-2.800-3.800z" fill="#e98f10" stroke="#b76505" strokeWidth="0.600" />
    <circle cx="25.500" cy="14" r="5" fill="#fff5e2" stroke="#e58e23" /><path d="m23 12 2.500 2.500 2.500-1.500" stroke="#b5541b" fill="none" strokeWidth="1.300" />
    <path d="m12 23 14-5 4 9H12z" fill="#fdfdfd" stroke="#e9a94e" /><path d="m12 23 11 1 3-6" stroke="#e9a94e" fill="none" />
  </svg>
);

const NotepadIcon = () => (
  <svg width="32" height="34" viewBox="0 0 32 34">
    <defs><linearGradient id="pad" x1="0" y1="0" x2="0" y2="1"><stop offset="0.3" stopColor="#fff" /><stop offset="0.75" stopColor="#8bd02c" /><stop offset="1" stopColor="#1f7e12" /></linearGradient></defs>
    <path d="M2 2h17l6 5v25H2z" fill="url(#pad)" stroke="#6a6a6a" />
    <path d="M3 2.500h16" stroke="#777" strokeWidth="2.400" strokeDasharray="1.200 1.400" />
    <path d="M19 2v5h6z" fill="#e8e8e8" stroke="#6a6a6a" strokeWidth="0.800" />
    <text x="7" y="20" fill="#1c1c1c" fontFamily="Liberation Sans" fontWeight="400" fontSize="12" textLength="15" stroke="#1c1c1c" strokeWidth="0.300">n++</text>
    <path d="M18 27 20 20 28 4l3 1.500L23 22z" fill="#f0a21f" stroke="#a8630c" strokeWidth="0.700" />
    <path d="m27 5.500 1.500-3 3 1.300-1.500 3z" fill="#b02a3c" />
  </svg>
);

const TaskbarSection = () => (
  <Taskbar>
    <Streak width="120" height="38" viewBox="0 0 120 38">
      <defs><filter id="soft"><feGaussianBlur stdDeviation="1.600" /></filter></defs>
      <path d="M20-6Q62 10 92 46" stroke="#a5cff5" strokeWidth="10" fill="none" filter="url(#soft)" />
    </Streak>
    <StartOrb><Orb /></StartOrb>
    <TaskItems>
      <TaskItem><IeIcon /></TaskItem>
      <TaskItem $state="open"><ExplorerIcon /></TaskItem>
      <TaskItem><MediaIcon /></TaskItem>
      <TaskItem><FirefoxIcon /></TaskItem>
      <TaskItem $state="active"><ChromeIcon /></TaskItem>
      <TaskItem $state="open"><NotesIcon /></TaskItem>
      <TaskItem $state="open"><LyncIcon /></TaskItem>
      <TaskItem $state="open"><SkypeIcon /></TaskItem>
      <TaskItem $state="open"><OutlookIcon /></TaskItem>
      <TaskItem $state="open"><NotepadIcon /></TaskItem>
    </TaskItems>
    <Tray>
      <TrayIcon $gap={13}><svg width="8" height="5" viewBox="0 0 8 5"><path d="M0 5 4 0l4 5z" fill="#fff" /></svg></TrayIcon>
      <TrayIcon $gap={8}>
        <svg width="15" height="16" viewBox="0 0 15 16">
          <path d="M0 5h3l4-4v14l-4-4H0z" fill="#f4f4f4" stroke="#333" strokeWidth="0.500" /><path d="M9 5q1.500 3 0 6" stroke="#ccc" fill="none" />
          <circle cx="10.200" cy="11" r="3.700" fill="#fff" stroke="#e01b1b" strokeWidth="1.700" /><path d="m7.800 8.600 4.800 4.800" stroke="#e01b1b" strokeWidth="1.700" />
        </svg>
      </TrayIcon>
      <TrayIcon $gap={9}>
        <svg width="16" height="16" viewBox="0 0 16 16"><path d="M1.500 1v14" stroke="#fff" strokeWidth="1.600" /><path d="M3 2h6v2h5.500L13 6.500l1 2.500H8.500V8H3z" fill="#fff" /></svg>
      </TrayIcon>
      <TrayIcon $gap={9}>
        <svg width="15" height="14" viewBox="0 0 15 14" shapeRendering="crispEdges"><path d="M1 13v-2M4 13v-3M7 13V8M10 13V5M13 13V1" stroke="#fff" strokeWidth="2" /></svg>
      </TrayIcon>
      <TrayIcon $gap={8}>
        <svg width="15" height="16" viewBox="0 0 15 16">
          <path d="M6 14.500H1.500V2.500h5M3 1h3" stroke="#fff" strokeWidth="1.600" fill="none" />
          <path d="M6 6h8v3q-.5 3-3 3.200V15H9v-2.800Q6.500 12 6 9zM7.500 2.500h1.600V6H7.500zM11 2.500h1.600V6H11z" fill="#fff" />
        </svg>
      </TrayIcon>
      <Clock>2:50 PM<br />11/27/2012</Clock>
    </Tray>
    <ShowDesktop />
  </Taskbar>
);

export default function App() {
  return (
    <Desktop>
      <GlobalStyle />
      <BrowserFrame />
      <AppHeader>
        <CqLogo />
        <Divider />
        <Brand><span><b>CQ5</b>WCM</span></Brand>
        <Consoles>
          {consoles.map((icon, i) => <ConsoleButton key={i} $selected={i === 0}>{icon}</ConsoleButton>)}
        </Consoles>
      </AppHeader>
      <Workspace>
        <SiteTree />
        <Splitter><SplitHandle /></Splitter>
        <PageGrid />
      </Workspace>
      <TaskbarSection />
      <Highlight width="370" height="70" viewBox="0 0 370 70">
        <ellipse cx="184.500" cy="34.500" rx="180" ry="29.800" fill="none" stroke="#ed1c24" strokeWidth="4.800" />
      </Highlight>
    </Desktop>
  );
}
